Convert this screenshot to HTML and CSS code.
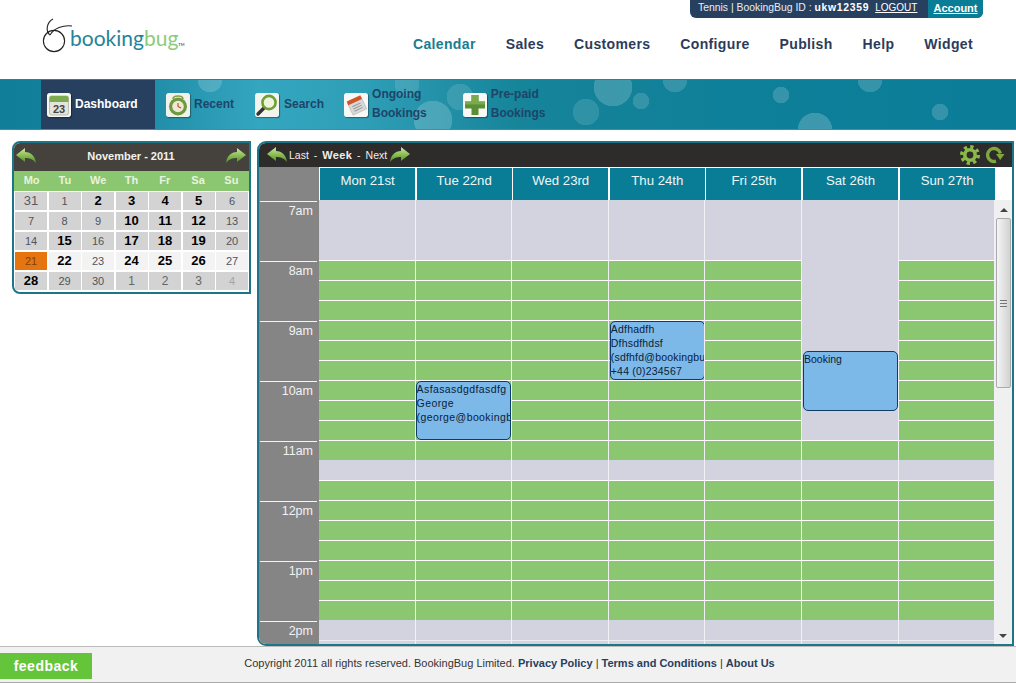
FILE: index.html
```html
<!DOCTYPE html>
<html lang="en">
<head>
<meta charset="utf-8">
<title>BookingBug Calendar</title>
<link rel="stylesheet" href="styles.css">
</head>
<body>
<svg class="defs" aria-hidden="true">
  <defs>
    <linearGradient id="arrowfill" x1="0" y1="0" x2="0" y2="1">
      <stop offset="0" stop-color="#cfe8a0"/>
      <stop offset=".55" stop-color="#86b94e"/>
      <stop offset="1" stop-color="#4f8a2c"/>
    </linearGradient>
    <symbol id="arrow" viewBox="0 0 22 18">
      <path d="M1 8 L10 1 V5 C16 5 20 9 21 16 C18 12 14 11 10 11 V15 Z" fill="url(#arrowfill)"/>
    </symbol>
  </defs>
</svg>

<header class="top">
  <a class="logo">
    <svg class="logo-bug" viewBox="0 0 34 36" aria-hidden="true">
      <circle cx="13" cy="24" r="10.6" fill="none" stroke="#222" stroke-width="1.1"/>
      <path d="M12 2 C6 5 4 14 9 18 M9 18 C13 11 22 8 31 9" fill="none" stroke="#222" stroke-width="1.1"/>
    </svg>
    <span class="logo-text">booking<b>bug</b><small>TM</small></span>
  </a>
  <div class="top-right">
    <div class="account">
      <span class="account-info">Tennis | BookingBug ID : <b>ukw12359</b><a class="logout">LOGOUT</a></span>
      <a class="account-link">Account</a>
    </div>
    <nav class="main-nav">
      <a class="current">Calendar</a><a>Sales</a><a>Customers</a><a>Configure</a><a>Publish</a><a>Help</a><a>Widget</a>
    </nav>
  </div>
</header>

<div class="banner">
  <a class="tab tab-active">
    <svg class="tab-icon" viewBox="0 0 24 24" aria-hidden="true">
      <rect width="24" height="24" rx="2" fill="#f7f7f2"/>
      <rect x="2.5" y="3" width="19" height="19" rx="2" fill="#e4e4da" stroke="#9a9a90" stroke-width=".6"/>
      <path d="M2.5 9V5a2 2 0 0 1 2-2h15a2 2 0 0 1 2 2v4z" fill="#7eaa52"/>
      <text x="12" y="20" class="cal-num">23</text>
    </svg>
    <span>Dashboard</span>
  </a>
  <a class="tab">
    <svg class="tab-icon" viewBox="0 0 24 24" aria-hidden="true">
      <rect width="24" height="24" rx="2" fill="#f2f2ea"/>
      <path d="M7 6 C7 2 17 2 17 6" fill="none" stroke="#8a9a50" stroke-width="1.6"/>
      <circle cx="12" cy="13.5" r="9" fill="#6d9a3f"/>
      <circle cx="12" cy="13.5" r="5.8" fill="#efe9d4"/>
      <path d="M12 10 V13.5 L15 15" fill="none" stroke="#b5482a" stroke-width="1.1"/>
    </svg>
    <span>Recent</span>
  </a>
  <a class="tab">
    <svg class="tab-icon" viewBox="0 0 24 24" aria-hidden="true">
      <rect width="24" height="24" rx="2" fill="#f4f4ee"/>
      <path d="M9 15 L3 21" stroke="#333" stroke-width="3.4" stroke-linecap="round"/>
      <circle cx="14" cy="9.5" r="6.6" fill="#eef4dc" stroke="#6f9f35" stroke-width="2.6"/>
    </svg>
    <span>Search</span>
  </a>
  <a class="tab">
    <svg class="tab-icon" viewBox="0 0 24 24" aria-hidden="true">
      <rect width="24" height="24" rx="2" fill="#f8f8f6"/>
      <g transform="rotate(-25 12 12)">
        <rect x="5" y="7" width="15" height="13" fill="#d8d8d8" stroke="#aaa" stroke-width=".5"/>
        <rect x="5" y="5" width="15" height="4" fill="#d2552a"/>
        <path d="M8 12h9M8 14.5h9M8 17h9" stroke="#999" stroke-width="1"/>
      </g>
    </svg>
    <span class="two">Ongoing<br>Bookings</span>
  </a>
  <a class="tab">
    <svg class="tab-icon" viewBox="0 0 24 24" aria-hidden="true">
      <rect width="24" height="24" rx="2" fill="#f8f8f6"/>
      <path d="M8.5 2h7v6.5H22v7h-6.5V22h-7v-6.5H2v-7h6.5z" fill="#5b8f35"/>
      <path d="M8.5 2h7v6.5H22v3H2v-3h6.5z" fill="#79aa4d"/>
    </svg>
    <span class="two">Pre-paid<br>Bookings</span>
  </a>
</div>

<main class="content">
  <section class="mini">
    <div class="mini-title">
      <svg class="arrow" aria-hidden="true"><use href="#arrow"/></svg>
      <span>November - 2011</span>
      <svg class="arrow flip" aria-hidden="true"><use href="#arrow"/></svg>
    </div>
    <div class="mini-days"><span>Mo</span><span>Tu</span><span>We</span><span>Th</span><span>Fr</span><span>Sa</span><span>Su</span></div>
    <div class="mini-grid">
      <span class="big">31</span><span>1</span><span class="on">2</span><span class="on">3</span><span class="on">4</span><span class="on">5</span><span>6</span>
      <span>7</span><span>8</span><span>9</span><span class="on">10</span><span class="on">11</span><span class="on">12</span><span>13</span>
      <span>14</span><span class="on">15</span><span>16</span><span class="on">17</span><span class="on">18</span><span class="on">19</span><span>20</span>
      <span class="today">21</span><span class="on now">22</span><span class="now">23</span><span class="on now">24</span><span class="on now">25</span><span class="on now">26</span><span class="now">27</span>
      <span class="on">28</span><span>29</span><span>30</span><span class="next">1</span><span class="next">2</span><span class="next">3</span><span class="next faint">4</span>
    </div>
  </section>

  <section class="week">
    <div class="week-bar">
      <svg class="arrow" aria-hidden="true"><use href="#arrow"/></svg>
      <span class="week-nav">Last</span><span class="week-sep">-</span><b>Week</b><span class="week-sep">-</span><span class="week-next">Next</span>
      <svg class="arrow flip" aria-hidden="true"><use href="#arrow"/></svg>
      <span class="week-tools">
        <svg class="tool" viewBox="0 0 22 22" aria-hidden="true">
          <circle cx="11" cy="11" r="8.2" fill="none" stroke="#8ab84a" stroke-width="3.6" stroke-dasharray="3.2 3.24"/>
          <circle cx="11" cy="11" r="5.2" fill="none" stroke="#8ab84a" stroke-width="3.6"/>
        </svg>
        <svg class="tool" viewBox="0 0 22 22" aria-hidden="true">
          <path d="M13 17.2 A6.5 6.5 0 1 1 17.4 9.5" fill="none" stroke="#7fa63f" stroke-width="3.4"/>
          <path d="M13 10 H21.5 L17.2 16 Z" fill="#7fa63f"/>
        </svg>
      </span>
    </div>

    <div class="week-cols week-head">
      <div class="corner"></div>
      <div class="day-head">Mon 21st</div>
      <div class="day-head">Tue 22nd</div>
      <div class="day-head">Wed 23rd</div>
      <div class="day-head">Thu 24th</div>
      <div class="day-head">Fri 25th</div>
      <div class="day-head">Sat 26th</div>
      <div class="day-head">Sun 27th</div>
    </div>

    <div class="week-cols week-body">
      <div class="times">
        <div class="hour">7am</div><div class="hour">8am</div><div class="hour">9am</div><div class="hour">10am</div><div class="hour">11am</div><div class="hour">12pm</div><div class="hour">1pm</div><div class="hour">2pm</div>
      </div>
      <div class="col">
        <div class="free h60"></div><div class="open h180"></div><div class="open h20"></div><div class="free h20"></div><div class="open h140"></div><div class="free h20"></div><div class="free tail"></div>
      </div>
      <div class="col">
        <div class="free h60"></div><div class="open h180"></div><div class="open h20"></div><div class="free h20"></div><div class="open h140"></div><div class="free h20"></div><div class="free tail"></div>
        <div class="booking at-tue">Asfasasdgdfasdfg<br>George<br>(george@bookingbug.com)</div>
      </div>
      <div class="col">
        <div class="free h60"></div><div class="open h180"></div><div class="open h20"></div><div class="free h20"></div><div class="open h140"></div><div class="free h20"></div><div class="free tail"></div>
      </div>
      <div class="col">
        <div class="free h60"></div><div class="open h180"></div><div class="open h20"></div><div class="free h20"></div><div class="open h140"></div><div class="free h20"></div><div class="free tail"></div>
        <div class="booking at-thu">Adfhadfh<br>Dfhsdfhdsf<br>(sdfhfd@bookingbug.com)<br>+44 (0)234567</div>
      </div>
      <div class="col">
        <div class="free h60"></div><div class="open h180"></div><div class="open h20"></div><div class="free h20"></div><div class="open h140"></div><div class="free h20"></div><div class="free tail"></div>
      </div>
      <div class="col">
        <div class="free h240"></div><div class="open h20"></div><div class="free h20"></div><div class="open h140"></div><div class="free h20"></div><div class="free tail"></div>
        <div class="booking at-sat">Booking</div>
      </div>
      <div class="col">
        <div class="free h60"></div><div class="open h180"></div><div class="open h20"></div><div class="free h20"></div><div class="open h140"></div><div class="free h20"></div><div class="free tail"></div>
      </div>
      <div class="scrollbar" aria-hidden="true">
        <i class="sb-up"></i>
        <div class="sb-thumb"><i class="sb-grip"></i></div>
        <i class="sb-down"></i>
      </div>
    </div>
  </section>
</main>

<footer class="foot">
  <a class="feedback">feedback</a>
  <p class="copy">Copyright 2011 all rights reserved. BookingBug Limited. <a>Privacy Policy</a> | <a>Terms and Conditions</a> | <a>About Us</a></p>
</footer>
</body>
</html>
```

FILE: styles.css
```css
* { box-sizing: border-box; }
html, body { margin: 0; padding: 0; }
body {
  width: 1016px;
  height: 683px;
  overflow: hidden;
  background: #fff;
  font-family: "Liberation Sans", Arial, sans-serif;
  color: #222;
}
.defs { width: 0; height: 0; display: block; }

/* header */
.top { height: 79px; display: flex; justify-content: space-between; }
.logo { display: flex; align-items: flex-end; margin: 17px 0 0 41px; height: 36px; }
.logo-bug { width: 34px; height: 36px; flex: none; }
.logo-text {
  font-family: Lato, sans-serif;
  font-weight: 400;
  font-size: 21px;
  line-height: 24px;
  color: #23849c;
  margin-left: -5px;
  margin-bottom: -4px;
}
.logo-text b { font-weight: 400; color: #8ccb7a; }
.logo-text small { font-size: 4px; color: #666; font-weight: 700; }
.top-right { display: flex; flex-direction: column; align-items: flex-end; }
.account {
  margin-right: 33px;
  height: 18px;
  width: 293px;
  display: flex;
  background: #27405f;
  border-radius: 0 0 6px 6px;
  overflow: hidden;
  font-size: 10.4px;
  line-height: 16px;
  color: #e8edf2;
}
.account-info { padding-left: 8px; flex: 1; white-space: nowrap; }
.account-info b { color: #fff; letter-spacing: .7px; }
.logout { color: #fff; text-decoration: underline; margin-left: 6px; font-size: 10px; }
.account-link { width: 55px; flex: none; background: #0a7d96; color: #fff; font-weight: 700; font-size: 11px; text-align: center; text-decoration: underline; }
.main-nav {
  display: flex;
  gap: 30px;
  margin: 18px 43px 0 0;
  font-size: 14px;
  font-weight: 700;
  line-height: 16px;
  letter-spacing: .35px;
  color: #2b3b5c;
}
.main-nav .current { color: #1a7c92; }

/* banner */
.banner {
  height: 51px;
  border-top: 1px solid #55707f;
  border-bottom: 1px solid #6b7f88;
  display: flex;
  padding-left: 41px;
  background:
    radial-gradient(circle at 210px 0, #ffffff2b 12px, transparent 12.5px),
    radial-gradient(circle at 407px 4px, #ffffff1f 12px, transparent 12.5px),
    radial-gradient(circle at 460px 17px, #ffffff1f 13px, transparent 13.5px),
    radial-gradient(circle at 433px 40px, #ffffff2e 19px, transparent 19.5px),
    radial-gradient(circle at 613px 7px, #ffffff2e 19px, transparent 19.5px),
    radial-gradient(circle at 641px 21px, #ffffff26 8px, transparent 8.5px),
    radial-gradient(circle at 586px 32px, #ffffff1f 13px, transparent 13.5px),
    radial-gradient(circle at 675px 0, #ffffff26 12px, transparent 12.5px),
    radial-gradient(circle at 781px 15px, #ffffff2b 8px, transparent 8.5px),
    radial-gradient(circle at 870px 0, #ffffff2b 12px, transparent 12.5px),
    radial-gradient(circle at 940px 32px, #ffffff2b 8px, transparent 8.5px),
    radial-gradient(circle at 815px 50px, #ffffff33 17px, transparent 17.5px),
    linear-gradient(90deg, #0f7d98 0, #1a86a2 120px, #35a6bf 260px, #2f9fb8 360px, #168499 520px, #0d7f99 800px, #0b7d98 1016px);
}
.tab {
  display: flex;
  align-items: center;
  gap: 4px;
  height: 49px;
  font-size: 12px;
  font-weight: 700;
  line-height: 19px;
  color: #1d4569;
  margin-right: 11px;
}
.tab:nth-child(2) { margin-right: 21px; }
.tab:nth-child(3) { margin-right: 20px; gap: 5px; }
.tab:nth-child(4) { margin-right: 36px; }
.tab-active { background: #27405f; color: #fff; width: 114px; padding-left: 6px; }
.two { margin-bottom: 2px; }
.tab-icon { width: 24px; height: 24px; flex: none; box-shadow: 1px 1px 1px #0000005c; border-radius: 2px; }
.cal-num { font: 700 11px "Liberation Sans", Arial, sans-serif; fill: #444; text-anchor: middle; }

/* content */
.content { height: 516px; display: flex; align-items: flex-start; gap: 6px; padding: 11px 2px 0 12px; }

/* mini calendar */
.mini {
  width: 239px;
  flex: none;
  border: 2px solid #1b7787;
  border-radius: 8px 0 0 8px;
  background: #fff;
  overflow: hidden;
}
.mini-title {
  height: 28px;
  background: #45423d;
  display: flex;
  align-items: center;
  justify-content: space-between;
  padding: 0 2px 2px 1px;
  color: #f2f2ee;
  font-size: 11px;
  font-weight: 700;
}
.mini-days {
  height: 20px;
  background: #8bc770;
  display: grid;
  grid-template-columns: repeat(7, 1fr);
  padding: 0 1px;
  text-align: center;
  font-size: 11px;
  font-weight: 700;
  line-height: 18px;
  color: #e9f3dc;
}
.mini-grid {
  display: grid;
  grid-template-columns: repeat(7, 1fr);
  grid-auto-rows: 18px;
  gap: 2px 1.5px;
  padding: 1px 1px 0;
  height: 101px;
  text-align: center;
  font-size: 11px;
  line-height: 18px;
  color: #4d5560;
}
.mini-grid span { background: #d3d3d3; }
.mini-grid .big { font-size: 13px; color: #5a5a5a; }
.mini-grid .on { font-size: 13px; font-weight: 700; color: #000; }
.mini-grid .now { background: #f3f3f3; }
.mini-grid .today { background: #e6750f; color: #7a4310; }
.mini-grid .next { font-size: 12px; font-weight: 400; color: #666; }
.mini-grid .faint { color: #a5a5a5; font-size: 11px; }

.arrow { width: 22px; height: 18px; flex: none; }
.flip { transform: scaleX(-1); }

/* week panel */
.week {
  width: 757px;
  height: 505px;
  flex: none;
  border: 2px solid #1b7787;
  border-radius: 9px 0 0 9px;
  overflow: hidden;
  background: #fff;
}
.week-bar {
  height: 24px;
  background: #2e2c2a;
  display: flex;
  align-items: center;
  padding: 0 7px 1px 7px;
  font-size: 10.5px;
  color: #eee;
}
.week-bar b { letter-spacing: .3px; font-size: 11px; }
.week-nav { margin-left: 1px; }
.week-next { margin-right: 2px; }
.week-sep { margin: 0 5px; }
.week-tools { margin-left: auto; display: flex; gap: 2px; align-items: center; }
.tool { width: 22px; height: 22px; }

.week-cols { display: grid; grid-template-columns: 60px repeat(7, 96.6px) 1fr; }
.week-head { height: 33px; }
.corner { background: #858585; }
.day-head {
  margin: 1px .5px 0 1px;
  background: #0a7d96;
  color: #eef6f8;
  font-size: 13.2px;
  line-height: 26px;
  text-align: center;
}
.week-body { height: 444px; overflow: hidden; }
.times { background: #858585; overflow: hidden; height: 444px; }
.hour {
  height: 60px;
  margin: 1px 2px -1px 1px;
  border-top: 1px solid #f4f4f4;
  padding: 2px 4px 0 0;
  text-align: right;
  font-size: 12.5px;
  line-height: 15px;
  color: #f2f2f2;
}
.col { position: relative; border-right: 1px solid #f0f0f5; height: 444px; overflow: hidden; }
.free { background: #d3d3df; }
.open { background: repeating-linear-gradient(180deg, #fff 0 1px, #8bc770 1px 20px); }
.h20 { height: 20px; }
.h60 { height: 60px; }
.h140 { height: 140px; }
.h180 { height: 180px; }
.h240 { height: 240px; }
.tail { height: 10px; border-top: 1px solid #ececf2; }
.booking {
  position: absolute;
  left: 1px;
  width: 95px;
  border: 1px solid #0e3c66;
  border-radius: 5px;
  background: #7cb8e8;
  overflow: hidden;
  white-space: nowrap;
  font-size: 10.5px;
  line-height: 14px;
  color: #0b2238;
}
.at-tue { top: 181px; height: 59px; left: 0; width: 95px; letter-spacing: .4px; }
.at-thu { top: 121px; height: 59px; letter-spacing: .2px; }
.at-sat { top: 151px; height: 60px; }

/* scrollbar */
.scrollbar { background: #f0f0f0; position: relative; display: flex; flex-direction: column; align-items: center; }
.sb-up { margin-top: 8px; width: 0; height: 0; border: 4px solid transparent; border-top: 0; border-bottom-color: #444; }
.sb-thumb {
  position: absolute;
  top: 18px;
  left: 1px;
  width: 15px;
  height: 170px;
  border: 1px solid #aaa;
  border-radius: 2px;
  background: linear-gradient(90deg, #f4f4f4, #d2d2d2);
  display: flex;
  align-items: center;
  justify-content: center;
}
.sb-grip { width: 7px; height: 7px; border-top: 1px solid #777; border-bottom: 1px solid #777; background: linear-gradient(#777, #777) center / 100% 1px no-repeat; }
.sb-down { position: absolute; top: 434px; left: 4px; width: 0; height: 0; border: 4px solid transparent; border-bottom: 0; border-top-color: #444; }

/* footer */
.foot {
  position: relative;
  height: 37px;
  border-top: 1px solid #bbb;
  border-bottom: 1px solid #aaa;
  background: #f1f1f1;
  display: flex;
  align-items: center;
  justify-content: center;
}
.feedback {
  position: absolute;
  left: 0;
  top: 6px;
  width: 92px;
  height: 26px;
  background: #65c53a;
  color: #fff;
  font-size: 14px;
  font-weight: 700;
  letter-spacing: .5px;
  line-height: 26px;
  text-align: center;
}
.copy { margin: 0 0 3px 3px; font-size: 11px; color: #333; }
.copy a { color: #27405f; font-weight: 700; }
```
